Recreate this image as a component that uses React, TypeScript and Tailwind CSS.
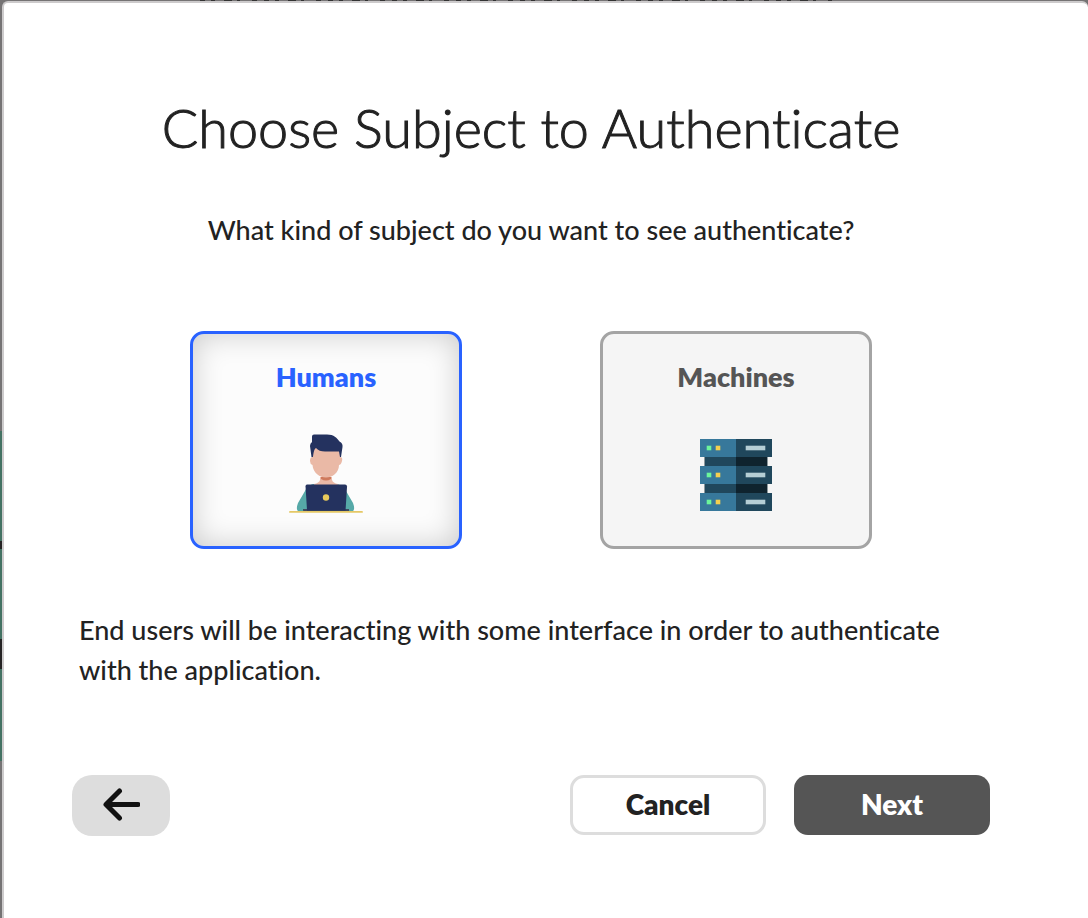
import { useState } from "react";

function HumanIcon() {
  return (
    <svg viewBox="0 0 74 80" className="h-20 w-[74px]" aria-hidden="true">
      <path d="M24 50 C20 51.500 18 53 16 57 L9 69 Q6 77 11 78 H62 Q67 77 64 69 L57 57 C55 53 52 51 48 50 Z" fill="#56a9a8" />
      <path d="M31 43 H43 V46 Q44 49 49 50 V54 H25 V50 Q30 49 31 46 Z" fill="#eab9a6" />
      <path d="M32 43 H42 V45 Q37 48 32 45 Z" fill="#cf7a5c" />
      <path d="M24 17 Q26 12 30 13 H50 Q51 15 51 23 Q54 23 53 27 Q52 31 50 31 C50 39 43 43.500 37 43.500 S24 39 23.500 31 Q21 30 21 27 Q21 23 23.500 23 Z" fill="#eab9a6" />
      <path d="M23 2.500 Q23 .5 25 .5 H38 C45 .5 48 4 50.500 7.500 Q54 9 53.500 13 L52 23 H51 L50 17.500 H36 Q30 17.500 27 14 C25 15 24.500 19 24 23 H22.500 L21 12 Q21 9.500 23 8 Z" fill="#24325f" />
      <path d="M14 75 H60 V77 Q60 78 59 78 H16 Q14 78 14 76 Z" fill="#3f4961" />
      <path d="M18 50.500 H56 Q58 50.500 58 52.500 L56.500 76.500 H18 L16.500 52.500 Q16.500 50.500 18 50.500 Z" fill="#24325f" />
      <circle cx="37" cy="63.500" r="3.200" fill="#e7c95b" />
      <path d="M1 77.900 H73" stroke="#e5c866" strokeWidth="1.900" strokeLinecap="round" />
    </svg>
  );
}

function ServerIcon() {
  return (
    <svg viewBox="0 0 72 72" className="size-[72px]" aria-hidden="true">
      <rect x="4" y="9" width="64" height="54" fill="#8b979c" />
      <rect x="5" y="9" width="31" height="54" fill="#20475c" />
      <rect x="36" y="9" width="31" height="54" fill="#0f232e" />
      {[0, 27, 54].map((y) => (
        <g key={y}>
          <rect x="0" y={y} width="36" height="18" fill="#37789b" />
          <rect x="36" y={y} width="36" height="18" fill="#20475c" />
          <rect x="6.700" y={y + 6.700} width="4.600" height="4.600" fill="#6cf59b" />
          <rect x="15.700" y={y + 6.700} width="4.600" height="4.600" fill="#f5cf4f" />
          <rect x="45.700" y={y + 6.700} width="19.600" height="4.600" fill="#b5ced5" />
        </g>
      ))}
    </svg>
  );
}

const subjects = [
  {
    id: "humans",
    label: "Humans",
    Icon: HumanIcon,
    iconBox: "mt-[37px]",
    description:
      "End users will be interacting with some interface in order to authenticate with the application.",
  },
  {
    id: "machines",
    label: "Machines",
    Icon: ServerIcon,
    iconBox: "mt-[42px]",
    description: "",
  },
];

export default function App() {
  const [selected, setSelected] = useState("humans");
  const current = subjects.find((s) => s.id === selected);

  return (
    <div className="flex min-h-screen flex-col bg-[#757374] font-['Lato',sans-serif] text-[#222222] [font-variant-ligatures:none]">
      <svg viewBox="0 0 1088 1" className="h-px w-full shrink-0" preserveAspectRatio="none" aria-hidden="true">
        <path d="M200 .5 H832" stroke="#333" strokeWidth="1" strokeDasharray="5 6 4 9 8 5 3 12 5 7" />
      </svg>
      <div className="flex grow">
        <div className="flex w-0.5 shrink-0 flex-col" aria-hidden="true">
          <div className="h-[430px]" />
          <div className="h-[110px] bg-[#437263]" />
          <div className="h-2 bg-[#252324]" />
          <div className="h-[90px] bg-[#437263]" />
          <div className="h-[30px] bg-[#252324]" />
          <div className="h-[92px] bg-[#437263]" />
        </div>
        <main className="grow rounded-t-md border-t-2 border-l-2 border-[#cdcbcc] bg-white pr-[98px] pl-[68px]">
          <h1 className="mt-[91px] text-center text-[54px] leading-[68px] font-light [-webkit-text-stroke:1px_#222222]">
            Choose Subject to Authenticate
          </h1>
          <p className="mt-12 text-center text-[27px] leading-10 font-medium">
            What kind of subject do you want to see authenticate?
          </p>
          <div className="mt-[81px] flex justify-center gap-[138px]">
            {subjects.map(({ id, label, Icon, iconBox }) => (
              <button
                key={id}
                type="button"
                aria-pressed={selected === id}
                onClick={() => setSelected(id)}
                className={
                  "flex h-[218px] w-[272px] flex-col items-center rounded-[14px] border-3 pt-[23px] text-[27px] leading-10 font-extrabold " +
                  (selected === id
                    ? "border-[#2962ff] bg-[#fcfcfc] text-[#2962ff] shadow-[inset_0_0_30px_rgba(0,0,0,0.2)]"
                    : "border-[#a4a4a4] bg-[#f5f5f5] text-[#555555]")
                }
              >
                <span>{label}</span>
                <span className={iconBox}>
                  <Icon />
                </span>
              </button>
            ))}
          </div>
          <p className="mt-[61px] min-h-20 pl-[7px] text-[27px] leading-10 font-medium">{current?.description}</p>
          <div className="mt-[85px] mb-[80px] flex items-start justify-between">
            <button
              type="button"
              aria-label="Back"
              className="flex h-[61px] w-[98px] items-center justify-center rounded-[20px] bg-[#dddddd] pb-px"
            >
              <svg viewBox="0 0 38 34" className="h-[34px] w-[38px]" fill="none" stroke="#111" strokeWidth="5" strokeLinecap="round" strokeLinejoin="round" aria-hidden="true">
                <path d="M36 16.500 H4.500 M17.500 3 L4 16.500 L17.500 30" />
              </svg>
            </button>
            <div className="flex gap-7 text-[28px] font-extrabold">
              <button type="button" className="h-[60px] w-[196px] rounded-[14px] border-3 border-[#dddddd] bg-white pb-0.5">
                Cancel
              </button>
              <button type="button" className="h-[60px] w-[196px] rounded-[14px] bg-[#555555] pb-0.5 text-white">
                Next
              </button>
            </div>
          </div>
        </main>
      </div>
    </div>
  );
}
